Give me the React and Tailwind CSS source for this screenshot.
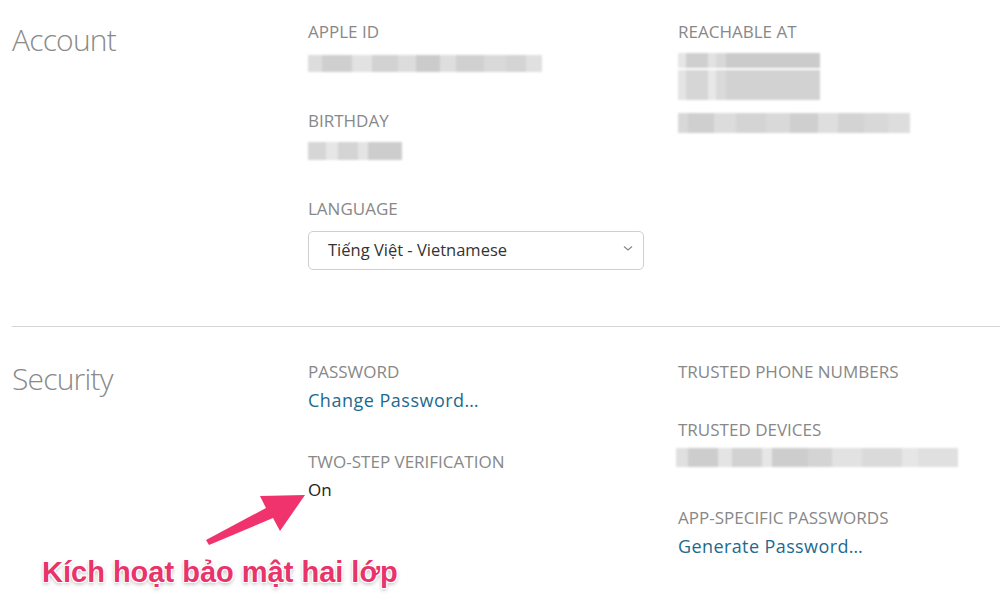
import React from "react";

const font = { fontFamily: '"Open Sans", "Noto Sans", sans-serif' };

function Blur({ segs, h = 17, className = "" }) {
  return (
    <div className={"flex blur-[1.2px] " + className} style={{ height: h }}>
      {segs.map((s, i) => (
        <div key={i} style={{ width: s[0], background: s[1] }} className="h-full" />
      ))}
    </div>
  );
}

function Label({ children, className = "" }) {
  return (
    <div className={"text-[17px] leading-[24px] text-[#888] uppercase " + className}>{children}</div>
  );
}

export default function App() {
  return (
    <div className="relative h-[608px] w-[1000px] overflow-hidden bg-white" style={font}>
      {/* Account */}
      <div className="grid grid-cols-[296px_370px_1fr] pl-3 pt-5 pb-[56px]">
        <h2 className="text-[30px] leading-[40px] font-light tracking-[-0.8px] text-[#8a8a8a]">Account</h2>
        <div className="flex flex-col">
          <Label>Apple ID</Label>
          <Blur
            className="mt-[11px]"
            segs={[
              [14, "#ddd"], [30, "#cfcfcf"], [20, "#e2e2e2"], [26, "#d2d2d2"], [18, "#dcdcdc"],
              [24, "#cbcbcb"], [16, "#dedede"], [28, "#d0d0d0"], [22, "#d9d9d9"], [20, "#d4d4d4"], [16, "#e0e0e0"],
            ]}
          />
          <Label className="mt-[37px]">Birthday</Label>
          <Blur
            h={18}
            className="mt-[9px]"
            segs={[[18, "#d6d6d6"], [12, "#e6e6e6"], [20, "#d4d4d4"], [10, "#e4e4e4"], [34, "#cdcdcd"]]}
          />
          <Label className="mt-[37px]">Language</Label>
          <div className="mt-[10px] flex h-[39px] w-[336px] items-center justify-between rounded-[5px] border border-[#cfcfcf] pl-[19px] pr-[10px]">
            <span className="text-[16.5px] text-[#333]">Tiếng Việt - Vietnamese</span>
            <svg width="10" height="7" viewBox="0 0 10 7" className="mb-1">
              <path d="M1 1.5 L5 5 L9 1.5" fill="none" stroke="#888" strokeWidth="1.2" />
            </svg>
          </div>
        </div>
        <div className="flex flex-col">
          <Label>Reachable at</Label>
          <div className="mt-[9px] flex flex-col gap-[2px]">
            <Blur h={15} segs={[[8, "#e6e6e6"], [22, "#cfcfcf"], [8, "#e2e2e2"], [10, "#d8d8d8"], [94, "#cbcbcb"]]} />
            <Blur h={30} segs={[[8, "#e4e4e4"], [22, "#d6d6d6"], [8, "#e8e8e8"], [10, "#dadada"], [94, "#d2d2d2"]]} />
          </div>
          <Blur
            h={20}
            className="mt-[13px]"
            segs={[
              [10, "#d8d8d8"], [26, "#cfcfcf"], [22, "#dcdcdc"], [30, "#d4d4d4"], [24, "#d9d9d9"],
              [28, "#cfcfcf"], [20, "#dedede"], [26, "#d3d3d3"], [24, "#d8d8d8"], [22, "#dddddd"],
            ]}
          />
        </div>
      </div>

      <div className="ml-3 border-t border-[#d4d4d4]" />

      {/* Security */}
      <div className="grid grid-cols-[296px_370px_1fr] pl-3 pt-[33px]">
        <h2 className="-mt-[1px] text-[30px] leading-[40px] font-light tracking-[-0.8px] text-[#8a8a8a]">Security</h2>
        <div className="flex flex-col">
          <Label>Password</Label>
          <div className="mt-[3px] text-[18px] leading-[26px] tracking-[0.5px] text-[#1d6a8e]">Change Password…</div>
          <Label className="mt-[37px]">Two-step verification</Label>
          <div className="mt-[3px] text-[17px] leading-[26px] text-[#222]">On</div>
        </div>
        <div className="flex flex-col">
          <Label>Trusted phone numbers</Label>
          <Label className="mt-[34px]">Trusted devices</Label>
          <Blur
            h={19}
            className="mt-[6px] -ml-[2px]"
            segs={[
              [12, "#e0e0e0"], [30, "#cdcdcd"], [14, "#e4e4e4"], [30, "#d2d2d2"], [10, "#e6e6e6"],
              [36, "#cdcdcd"], [24, "#d4d4d4"], [30, "#e2e2e2"], [40, "#dadada"], [16, "#e6e6e6"], [40, "#e0e0e0"],
            ]}
          />
          <Label className="mt-[39px]">App-specific passwords</Label>
          <div className="mt-[3px] text-[18px] leading-[26px] tracking-[0.4px] text-[#1d6a8e]">Generate Password…</div>
        </div>
      </div>

      {/* Annotation overlay */}
      <svg className="absolute left-0 top-0" width="1000" height="608" viewBox="0 0 1000 608">
        <polygon
          points="206,540 266,508 260,496 305,495 280,531 273,518 209,545"
          fill="#f0336d"
          strokeLinejoin="round"
        />
      </svg>
      <div
        className="absolute left-[42px] top-[558px] text-[29px] leading-[29px] font-bold text-[#e8336b] whitespace-nowrap"
        style={{
          fontFamily: '"Liberation Sans", Arial, sans-serif',
          textShadow:
            "0 0 2px #fff, 0 0 2px #fff, 1px 1px 0 #fff, -1px -1px 0 #fff, 1px -1px 0 #fff, -1px 1px 0 #fff, 0 2px 4px rgba(0,0,0,0.35)",
        }}
      >
        Kích hoạt bảo mật hai lớp
      </div>
    </div>
  );
}
